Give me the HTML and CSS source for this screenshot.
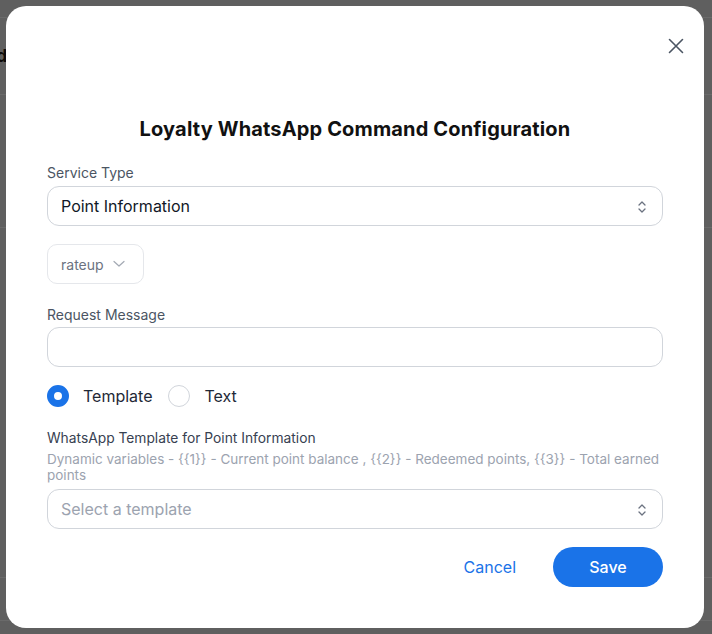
FILE: index.html
```html
<!DOCTYPE html>
<html lang="en">
<head>
<meta charset="utf-8">
<title>Loyalty WhatsApp Command Configuration</title>
<link rel="stylesheet" href="styles.css">
</head>
<body>
<div class="page">
  <div class="bg-row r1"></div>
  <div class="bg-row r2"><span class="bg-title">d</span></div>
  <div class="bg-row r3"></div>
  <div class="bg-row r4"></div>
  <div class="bg-row r5"></div>
</div>
<div class="overlay">
  <div class="modal">
    <button class="close" aria-label="Close">
      <svg width="16" height="16" viewBox="0 0 16 16"><path d="M1.5 1.5 L14.5 14.5 M14.5 1.5 L1.5 14.5" stroke="#4b5563" stroke-width="1.6" stroke-linecap="round" fill="none"/></svg>
    </button>
    <h2 class="title">Loyalty WhatsApp Command Configuration</h2>

    <label class="label">Service Type</label>
    <div class="select">
      <span class="value">Point Information</span>
      <svg class="updown" width="10" height="14" viewBox="0 0 10 14"><path d="M2 5 L5 2 L8 5 M2 9 L5 12 L8 9" stroke="#6b7280" stroke-width="1.3" fill="none" stroke-linecap="round" stroke-linejoin="round"/></svg>
    </div>

    <div class="mini-select">
      <span>rateup</span>
      <svg width="12" height="8" viewBox="0 0 12 8"><path d="M1 1.5 L6 6 L11 1.5" stroke="#a3a9b3" stroke-width="1.2" fill="none" stroke-linecap="round" stroke-linejoin="round"/></svg>
    </div>

    <label class="label req">Request Message</label>
    <div class="input"></div>

    <div class="radios">
      <label class="radio"><span class="dot on"></span>Template</label>
      <label class="radio"><span class="dot"></span>Text</label>
    </div>

    <label class="label dark">WhatsApp Template for Point Information</label>
    <p class="help">Dynamic variables - {{1}} - Current point balance , {{2}} - Redeemed points, {{3}} - Total earned points</p>
    <div class="select tpl">
      <span class="placeholder">Select a template</span>
      <svg class="updown" width="10" height="14" viewBox="0 0 10 14"><path d="M2 5 L5 2 L8 5 M2 9 L5 12 L8 9" stroke="#6b7280" stroke-width="1.3" fill="none" stroke-linecap="round" stroke-linejoin="round"/></svg>
    </div>

    <div class="actions">
      <button class="cancel">Cancel</button>
      <button class="save">Save</button>
    </div>
  </div>
</div>
</body>
</html>
```

FILE: styles.css
```css
* { box-sizing: border-box; }
html, body { margin: 0; padding: 0; }
body {
  width: 712px;
  height: 634px;
  overflow: hidden;
  background: #5f5f5f;
  font-family: Inter, "Noto Sans", sans-serif;
  position: relative;
}
.page { display: flex; flex-direction: column; }
.bg-row { border-bottom: 1px solid #6a6a6a; }
.r1 { height: 18px; }
.r2 { height: 77px; padding-top: 28px; }
.r3 { height: 133px; }
.r4 { height: 350px; }
.r5 { height: 43px; }
.bg-title {
  display: block;
  margin-left: -4px;
  font-size: 18px;
  font-weight: 700;
  color: #0c0a08;
  line-height: 20px;
}
.overlay {
  position: absolute;
  inset: 0;
  padding: 6px 8px 6px 6px;
  display: flex;
}
.modal {
  position: relative;
  flex: 1;
  background: #fff;
  border-radius: 20px;
  padding: 109px 41px 41px 41px;
  display: flex;
  flex-direction: column;
}
.close {
  position: absolute;
  top: 26px;
  right: 14px;
  width: 28px;
  height: 28px;
  border: 0;
  background: none;
  padding: 0;
  display: flex;
  align-items: center;
  justify-content: center;
}
.title {
  margin: 0 0 20px;
  text-align: center;
  font-size: 20px;
  line-height: 28px;
  font-weight: 700;
  letter-spacing: 0.15px;
  color: #111;
}
.label {
  display: block;
  font-size: 14px;
  line-height: 20px;
  color: #4b5563;
  margin-bottom: 3px;
}
.label.req { margin-top: 21px; margin-bottom: 2px; }
.label.dark { margin-top: 21px; color: #374151; margin-bottom: 3px; font-size: 13.8px; }
.select {
  height: 40px;
  border: 1px solid #d1d5db;
  border-radius: 12px;
  display: flex;
  align-items: center;
  justify-content: space-between;
  padding: 0 15px 0 13px;
  font-size: 16px;
  color: #111827;
}
.select .updown { margin-top: 1px; }
.placeholder { color: #9ca3af; }
.mini-select {
  margin-top: 18px;
  width: 97px;
  height: 40px;
  border: 1px solid #e5e7eb;
  border-radius: 10px;
  display: flex;
  align-items: center;
  gap: 9px;
  padding-left: 13px;
  font-size: 14px;
  color: #6b7280;
}
.input {
  height: 40px;
  border: 1px solid #d1d5db;
  border-radius: 12px;
}
.radios {
  margin-top: 18px;
  display: flex;
  gap: 16px;
  height: 22px;
}
.radio {
  display: flex;
  align-items: center;
  gap: 14px;
  font-size: 16px;
  color: #1f2937;
}
.dot {
  width: 22px;
  height: 22px;
  border-radius: 50%;
  border: 1px solid #d1d5db;
  background: #fff;
}
.dot.on { border: 7px solid #1a73e8; }
.help {
  margin: 0 0 6px;
  font-size: 13.5px;
  line-height: 16px;
  color: #9ca3af;
}
.tpl { margin-top: 0; }
.actions {
  margin-top: 18px;
  display: flex;
  justify-content: flex-end;
  align-items: center;
  gap: 37px;
}
.cancel {
  border: 0;
  background: none;
  padding: 0;
  font-family: inherit;
  font-size: 16px;
  color: #1a73e8;
}
.save {
  width: 110px;
  height: 40px;
  border: 0;
  border-radius: 20px;
  background: #1a73e8;
  color: #fff;
  font-family: inherit;
  font-size: 16px;
  font-weight: 500;
}
```
